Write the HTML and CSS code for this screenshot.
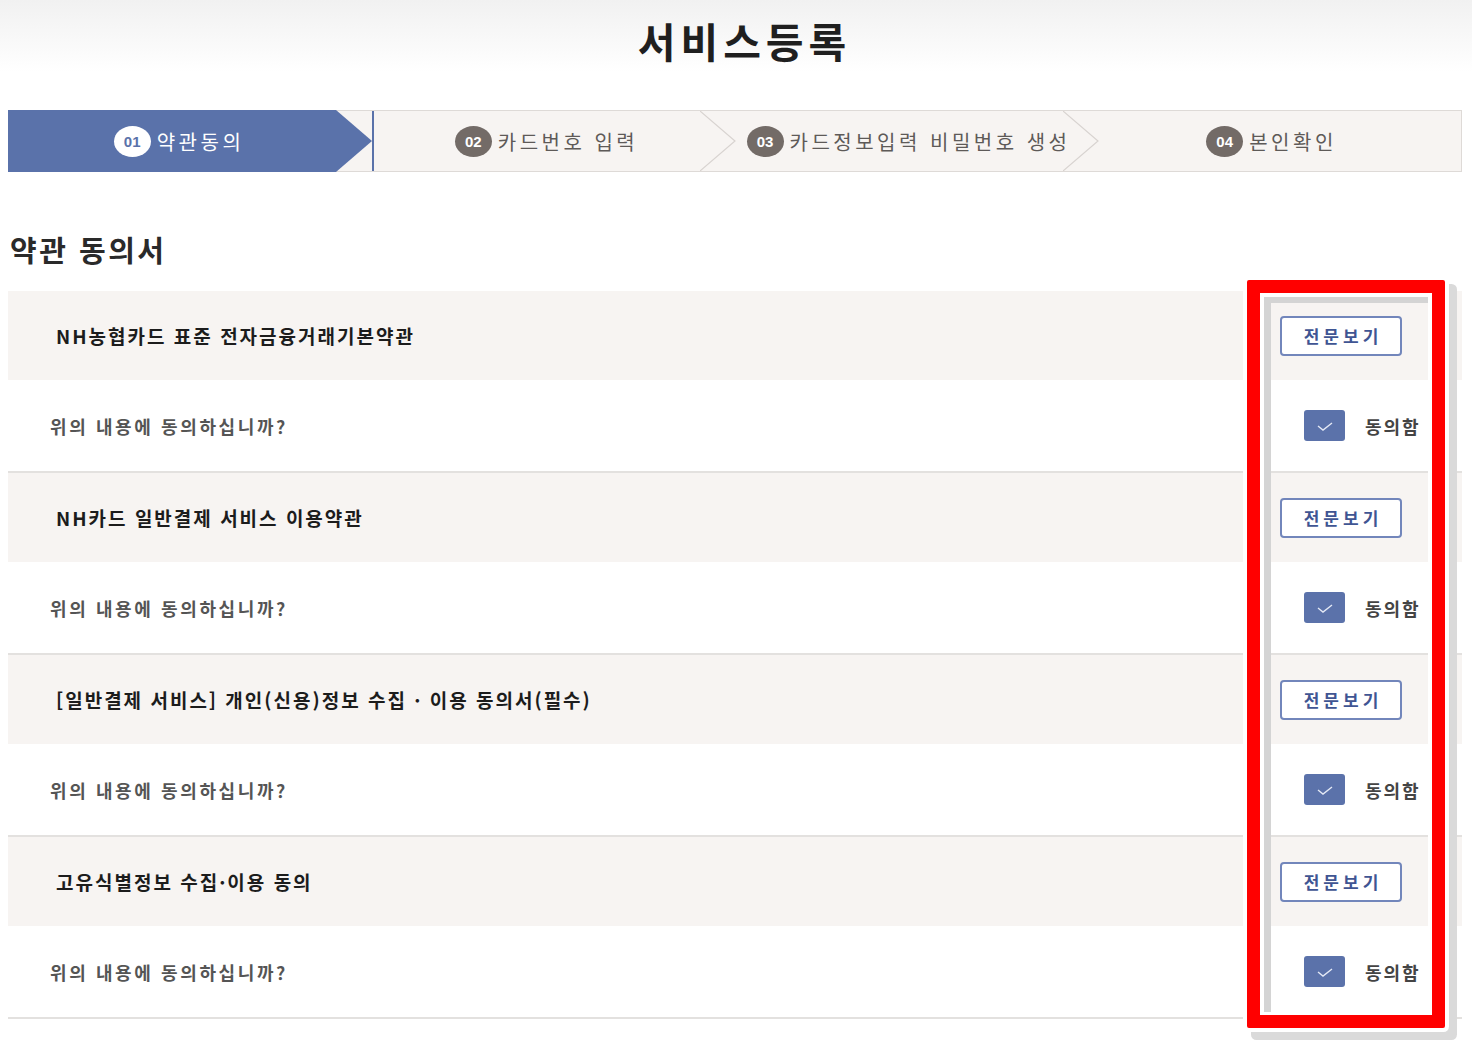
FILE: index.html
```html
<!DOCTYPE html>
<html lang="ko">
<head>
    <meta charset="UTF-8">
    <meta name="viewport" content="width=device-width, initial-scale=1.0">
    <title>서비스등록</title>
    <link rel="stylesheet" href="styles.css">
</head>
<body>
    <div class="page">
        <!-- Title -->
        <header class="page-head">
            <h1>서비스등록</h1>
        </header>

        <div class="content">
            <!-- Steps -->
            <ol class="steps">
                <li class="step is-active"><span class="step-num">01</span>약관동의</li>
                <li class="step step-after-active"><span class="step-num">02</span>카드번호 입력
                    <svg class="chevron" viewBox="0 0 36 62" preserveAspectRatio="none"><polyline points="0,0 35,31 0,62" /></svg>
                </li>
                <li class="step"><span class="step-num">03</span>카드정보입력 비밀번호 생성
                    <svg class="chevron" viewBox="0 0 36 62" preserveAspectRatio="none"><polyline points="0,0 35,31 0,62" /></svg>
                </li>
                <li class="step"><span class="step-num">04</span>본인확인</li>
            </ol>

            <h2 class="section-title">약관 동의서</h2>

            <!-- Terms -->
            <div class="terms">
                <section class="term">
                    <div class="term-head">
                        <h3 class="term-title">NH농협카드 표준 전자금융거래기본약관</h3>
                        <div class="term-side"><button class="btn-view">전문보기</button></div>
                    </div>
                    <div class="term-agree">
                        <p class="term-question">위의 내용에 동의하십니까?</p>
                        <div class="term-side">
                            <label class="agree"><span class="agree-box"><svg viewBox="0 0 20 14"><polyline points="3,7 8,11 17,4" /></svg></span>동의함</label>
                        </div>
                    </div>
                </section>
                <section class="term">
                    <div class="term-head">
                        <h3 class="term-title">NH카드 일반결제 서비스 이용약관</h3>
                        <div class="term-side"><button class="btn-view">전문보기</button></div>
                    </div>
                    <div class="term-agree">
                        <p class="term-question">위의 내용에 동의하십니까?</p>
                        <div class="term-side">
                            <label class="agree"><span class="agree-box"><svg viewBox="0 0 20 14"><polyline points="3,7 8,11 17,4" /></svg></span>동의함</label>
                        </div>
                    </div>
                </section>
                <section class="term">
                    <div class="term-head">
                        <h3 class="term-title">[일반결제 서비스] 개인(신용)정보 수집 · 이용 동의서(필수)</h3>
                        <div class="term-side"><button class="btn-view">전문보기</button></div>
                    </div>
                    <div class="term-agree">
                        <p class="term-question">위의 내용에 동의하십니까?</p>
                        <div class="term-side">
                            <label class="agree"><span class="agree-box"><svg viewBox="0 0 20 14"><polyline points="3,7 8,11 17,4" /></svg></span>동의함</label>
                        </div>
                    </div>
                </section>
                <section class="term">
                    <div class="term-head">
                        <h3 class="term-title">고유식별정보 수집·이용 동의</h3>
                        <div class="term-side"><button class="btn-view">전문보기</button></div>
                    </div>
                    <div class="term-agree">
                        <p class="term-question">위의 내용에 동의하십니까?</p>
                        <div class="term-side">
                            <label class="agree"><span class="agree-box"><svg viewBox="0 0 20 14"><polyline points="3,7 8,11 17,4" /></svg></span>동의함</label>
                        </div>
                    </div>
                </section>
            </div>
        </div>

        <!-- highlight box drawn over the right column -->
        <div class="callout"></div>
    </div>
</body>
</html>
```

FILE: styles.css
```css
* { box-sizing: border-box; }
body {
    margin: 0;
    font-family: "Noto Sans CJK KR", "Noto Sans", sans-serif;
    background-color: #ffffff;
    color: #222;
}
.page { position: relative; min-height: 1044px; }

.page-head {
    height: 80px;
    background: linear-gradient(#f1f1f1, #ffffff 90%);
    text-align: center;
}
.page-head h1 {
    margin: 0;
    padding-left: 17px;
    font-size: 41px;
    line-height: 80px;
    font-weight: 700;
    letter-spacing: 5px;
    color: #1f1f1f;
}

.content { margin: 30px 10px 0 8px; }

/* steps */
.steps {
    list-style: none;
    margin: 0;
    padding: 0;
    display: grid;
    grid-template-columns: repeat(4, 1fr);
    height: 62px;
    background-color: #f7f4f2;
    border: 1px solid #dedad7;
}
.step {
    position: relative;
    display: flex;
    align-items: center;
    justify-content: center;
    gap: 6px;
    padding-right: 16px;
    font-size: 20px;
    letter-spacing: 3.5px;
    color: #5e5a58;
}
.step-num {
    display: inline-flex;
    align-items: center;
    justify-content: center;
    width: 37px;
    height: 31px;
    border-radius: 50%;
    background-color: #736b67;
    color: #fff;
    font-family: "Liberation Sans", Arial, sans-serif;
    font-size: 15px;
    font-weight: 700;
    letter-spacing: 0;
}
.step.is-active {
    margin: -1px 0 -1px -1px;
    background-color: #5a72aa;
    color: #fff;
    clip-path: polygon(0 0, calc(100% - 36px) 0, 100% 50%, calc(100% - 36px) 100%, 0 100%);
    padding-right: 22px;
}
.step.is-active .step-num { background-color: #fff; color: #5a72aa; }
.step-after-active { border-left: 2px solid #5a72aa; }
.chevron {
    position: absolute;
    right: -1px;
    top: 0;
    width: 36px;
    height: 100%;
}
.chevron polyline { fill: none; stroke: #d8d3d0; stroke-width: 1.2; }

.section-title {
    margin: 57px 0 22px 2px;
    font-size: 29px;
    line-height: 40px;
    font-weight: 700;
    color: #2a2a2a;
    letter-spacing: 2.5px;
}

/* terms */
.term { border-bottom: 2px solid #e3e1df; }
.term-head, .term-agree { display: flex; align-items: center; }
.term-head { height: 89px; background-color: #f7f4f2; }
.term-agree { height: 91px; }
.term-title {
    flex: 1;
    margin: 0;
    padding-left: 48px;
    font-size: 19px;
    font-weight: 700;
    letter-spacing: 2px;
    color: #1c1c1c;
}
.term-question {
    flex: 1;
    margin: 0;
    padding-left: 42px;
    font-size: 18px;
    font-weight: 700;
    letter-spacing: 2.6px;
    color: #555;
}
.term-side { width: 192px; display: flex; align-items: center; }
.btn-view {
    margin-left: 10px;
    width: 122px;
    height: 40px;
    padding: 0 0 0 4px;
    background-color: #fff;
    border: 2px solid #7286bb;
    border-radius: 4px;
    color: #3f5593;
    font-family: inherit;
    font-size: 17px;
    font-weight: 700;
    letter-spacing: 4px;
    cursor: pointer;
}
.agree {
    display: flex;
    align-items: center;
    gap: 20px;
    margin-left: 34px;
    font-size: 18px;
    font-weight: 700;
    letter-spacing: 2px;
    color: #444;
}
.agree-box {
    width: 41px;
    height: 31px;
    border-radius: 3px;
    background-color: #5b72aa;
    display: flex;
    align-items: center;
    justify-content: center;
}
.agree-box svg { width: 20px; height: 14px; }
.agree-box polyline { fill: none; stroke: #e4e9f5; stroke-width: 1.4; }

/* red highlight */
.callout {
    position: absolute;
    left: 1247px;
    top: 280px;
    width: 198px;
    height: 748px;
    border: 13px solid #ff0000;
    border-radius: 2px;
    box-shadow: inset 0 0 0 4px #fff, 0 0 0 4px #fff, 8px 8px 0 4px #dadada;
    pointer-events: none;
}
.callout::before,
.callout::after {
    content: "";
    position: absolute;
    left: 4px;
    top: 4px;
    background-color: #d4d4d4;
}
.callout::before { width: 7px; height: 715px; }
.callout::after { width: 164px; height: 6px; }
```
